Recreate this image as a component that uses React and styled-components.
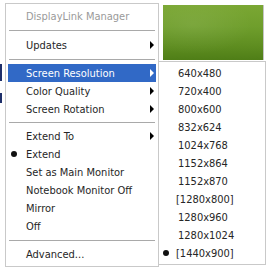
import React from 'react';
import styled, { createGlobalStyle } from 'styled-components';

const Global = createGlobalStyle`
  html, body { margin: 0; padding: 0; background: #ffffff; }
  body {
    font-family: "DejaVu Sans Condensed", "DejaVu Sans", sans-serif;
    font-stretch: semi-condensed;
    font-size: 11px;
    color: #262626;
  }
`;

const Desktop = styled.div`
  position: relative;
  width: 269px;
  height: 270px;
  overflow: hidden;
  background: #ffffff;
`;

const Wallpaper = styled.div`
  position: absolute;
  left: 163px;
  top: 5px;
  width: 100px;
  height: 55px;
  border-right: 1px solid #c4c4c4;
  background:
    radial-gradient(ellipse at 30% 35%, rgba(255,255,255,0.08), rgba(255,255,255,0) 60%),
    linear-gradient(180deg, #7aa733 0%, #6f9e2c 40%, #5e8d20 75%, #4f7e17 100%);
`;

const EdgeMark = styled.div`
  position: absolute;
  left: 0;
  top: ${p => p.$top}px;
  width: 2px;
  height: ${p => p.$h}px;
  background: #1e2f6a;
`;

const Menu = styled.div`
  position: absolute;
  left: ${p => p.$left}px;
  top: ${p => p.$top}px;
  width: ${p => p.$width}px;
  box-sizing: border-box;
  background: #ffffff;
  border: 1px solid #c9c9c9;
  padding: ${p => p.$pad};
  display: flex;
  flex-direction: column;
`;

const Item = styled.div`
  height: 18px;
  display: flex;
  align-items: center;
  position: relative;
  padding-left: ${p => p.$indent}px;
  padding-right: 2px;
  white-space: nowrap;
  background: ${p => (p.$active ? '#3169c6' : 'transparent')};
  color: ${p => (p.$active ? '#ffffff' : p.$muted ? '#9a9a9a' : '#262626')};
`;

const Label = styled.span`
  flex: 1;
`;

const Arrow = styled.span`
  width: 0;
  height: 0;
  border-top: 4px solid transparent;
  border-bottom: 4px solid transparent;
  border-left: 4px solid ${p => (p.$active ? '#ffffff' : '#000000')};
`;

const Dot = styled.span`
  position: absolute;
  left: ${p => p.$left}px;
  top: 6px;
  width: 6px;
  height: 6px;
  border-radius: 50%;
  background: #111111;
`;

const Separator = styled.div`
  height: ${p => p.$h}px;
  display: flex;
  align-items: center;
  padding: 0 1px;
  &::before {
    content: '';
    flex: 1;
    height: 1px;
    background: #a9a9a9;
  }
`;

const resolutions = [
  '640x480', '720x400', '800x600', '832x624', '1024x768', '1152x864',
  '1152x870', '[1280x800]', '1280x960', '1280x1024', '[1440x900]',
];

export default function App() {
  return (
    <Desktop>
      <Global />
      <Wallpaper />
      <EdgeMark $top={64} $h={17} />
      <EdgeMark $top={93} $h={10} />
      <Menu $left={5} $top={3} $width={154} $pad="3px 2px 3px 2px">
        <Item $indent={18} $muted>
          <Label>DisplayLink Manager</Label>
        </Item>
        <Separator $h={11} />
        <Item $indent={18}>
          <Label>Updates</Label>
          <Arrow />
        </Item>
        <Separator $h={10} />
        <Item $indent={18} $active>
          <Label>Screen Resolution</Label>
          <Arrow $active />
        </Item>
        <Item $indent={18}>
          <Label>Color Quality</Label>
          <Arrow />
        </Item>
        <Item $indent={18}>
          <Label>Screen Rotation</Label>
          <Arrow />
        </Item>
        <Separator $h={9} />
        <Item $indent={18}>
          <Label>Extend To</Label>
          <Arrow />
        </Item>
        <Item $indent={18}>
          <Dot $left={3} />
          <Label>Extend</Label>
        </Item>
        <Item $indent={18}>
          <Label>Set as Main Monitor</Label>
        </Item>
        <Item $indent={18}>
          <Label>Notebook Monitor Off</Label>
        </Item>
        <Item $indent={18}>
          <Label>Mirror</Label>
        </Item>
        <Item $indent={18}>
          <Label>Off</Label>
        </Item>
        <Separator $h={10} />
        <Item $indent={18}>
          <Label>Advanced...</Label>
        </Item>
      </Menu>
      <Menu $left={158} $top={61} $width={108} $pad="2px 2px 2px 2px">
        {resolutions.map((r, i) => (
          <Item key={r} $indent={r.startsWith('[') ? 15 : 17}>
            {i === resolutions.length - 1 && <Dot $left={2} />}
            <Label>{r}</Label>
          </Item>
        ))}
      </Menu>
    </Desktop>
  );
}
